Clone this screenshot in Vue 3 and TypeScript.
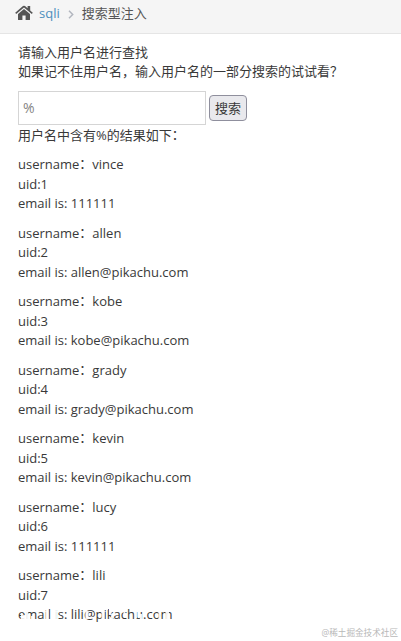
<script setup lang="ts">
import { ref } from 'vue'

interface User {
  uid: number
  username: string
  email: string
}

const keyword = ref('')
const users: User[] = [
  { uid: 1, username: 'vince', email: '111111' },
  { uid: 2, username: 'allen', email: 'allen@pikachu.com' },
  { uid: 3, username: 'kobe', email: 'kobe@pikachu.com' },
  { uid: 4, username: 'grady', email: 'grady@pikachu.com' },
  { uid: 5, username: 'kevin', email: 'kevin@pikachu.com' },
  { uid: 6, username: 'lucy', email: '111111' },
  { uid: 7, username: 'lili', email: 'lili@pikachu.com' },
]
</script>

<template>
  <div class="page">
    <nav class="breadcrumbs">
      <svg class="home" viewBox="0 0 18 16" aria-hidden="true">
        <path d="M9 3.9 L3 8.9 V14.4 Q3 15 3.6 15 H7.4 V10.6 H10.6 V15 H14.4 Q15 15 15 14.4 V8.9 Z" />
        <path d="M17.8 7.7 L15.2 5.5 V1 H12.6 V3.3 L10 1 Q9 .3 8 1 L.2 7.7 L1.2 8.9 L9 2.5 L16.8 8.9 Z" />
      </svg>
      <a class="link">sqli</a>
      <svg class="chevron" viewBox="0 0 6 9" aria-hidden="true">
        <path d="M1 .8 L4.7 4.5 L1 8.2" />
      </svg>
      <span class="current">搜索型注入</span>
    </nav>
    <main class="content">
      <p class="intro">请输入用户名进行查找<br />如果记不住用户名，输入用户名的一部分搜索的试试看？</p>
      <form class="search" @submit.prevent>
        <input v-model="keyword" class="field" type="text" placeholder="%" />
        <button class="submit" type="submit">搜索</button>
      </form>
      <p class="summary">用户名中含有%的结果如下<span class="colon">：</span></p>
      <p v-for="user in users" :key="user.uid" class="user">
        username<span class="colon">：</span>{{ user.username }}<br />uid:{{ user.uid }}<br />email is: {{ user.email }}
      </p>
    </main>
    <!-- White flecks over the last line -->
    <svg class="flecks" viewBox="0 0 160 16" aria-hidden="true">
      <path d="M3 9h5v5h-5z M7.5 3h2.5v11h-2.5z M13 10h3v4h-3z M27.5 1h3v13h-3z M35.5 1h3.5v13h-3.5z M67.5 5h3v8h-3z M83.5 4h3v9h-3z M87 1h3v3h-3z M91 1h2.5v8h-2.5z M93 10h2v4h-2z M105.5 5h2v6h-2z M117 4h2v8h-2z M122 8h2v6h-2z M140.5 5h2v9h-2z M147.5 6h3.5v8h-3.5z" />
    </svg>
    <div class="credit">@稀土掘金技术社区</div>
  </div>
</template>

<style>
body {
  margin: 0;
  background: #fff;
}
</style>

<style scoped>
.page {
  position: relative;
  box-sizing: border-box;
  height: 641px;
  overflow: hidden;
  font-family: "Open Sans", "Noto Sans CJK SC", sans-serif;
  font-size: 13px;
  line-height: 19.5px;
  color: #393939;
}
.breadcrumbs {
  display: flex;
  align-items: center;
  box-sizing: border-box;
  height: 34px;
  padding: 0 0 6px 15px;
  background: #f5f5f5;
  border-bottom: 1px solid #e5e5e5;
}
.home {
  width: 18px;
  height: 16px;
  margin-bottom: 1px;
  fill: #555;
}
.link {
  margin-left: 6px;
  color: #4c8fbd;
}
.chevron {
  width: 6px;
  height: 9px;
  margin: 1px 8px 0 8px;
  fill: none;
  stroke: #b2b6bf;
  stroke-width: 1.5;
}
.current {
  color: #555;
}
.content {
  padding: 8.5px 18px 0;
}
.intro {
  margin: 0 0 9.5px;
  white-space: nowrap;
}
.search {
  display: flex;
  align-items: center;
  gap: 3px;
  height: 34px;
}
.field {
  box-sizing: border-box;
  width: 188px;
  height: 34px;
  padding: 5px 4px 6px;
  border: 1px solid #d5d5d5;
  border-radius: 0;
  background: #fff;
  color: #858585;
  font: inherit;
  font-size: 14px;
}
.field::placeholder {
  color: #858585;
}
.submit {
  box-sizing: border-box;
  width: 38px;
  height: 26px;
  padding: 0;
  border: 1px solid #8f8f9d;
  border-radius: 4px;
  background: #e9e9ed;
  color: #393939;
  font: inherit;
  line-height: 22px;
}
.summary {
  margin: 0;
  padding: 0.7px 0 10px;
}
.user {
  margin: 0 0 10px;
}
.colon {
  position: relative;
  top: -1px;
}
.flecks {
  position: absolute;
  left: 18px;
  top: 606px;
  width: 160px;
  height: 16px;
  fill: #fff;
  opacity: 0.9;
}
.credit {
  position: absolute;
  right: 3px;
  bottom: 1px;
  color: #b8b8b8;
  font-size: 8.6px;
  line-height: 14px;
}
</style>
